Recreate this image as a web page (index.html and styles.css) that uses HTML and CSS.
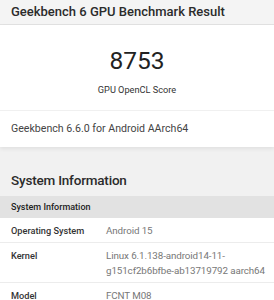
FILE: index.html
```html
<!DOCTYPE html>
<html lang="en">
<head>
    <meta charset="UTF-8">
    <meta name="viewport" content="width=device-width, initial-scale=1.0">
    <title>Geekbench 6 GPU Benchmark Result</title>
    <link rel="stylesheet" href="styles.css">
</head>
<body>
    <div class="page-title">Geekbench 6 GPU Benchmark Result</div>

    <div class="result-card">
        <div class="score-box">
            <div class="score">8753</div>
            <div class="score-label">GPU OpenCL Score</div>
        </div>
        <div class="version-row">Geekbench 6.6.0 for Android AArch64</div>
    </div>

    <h2 class="section-title">System Information</h2>

    <table class="info-table">
        <colgroup>
            <col class="name-col">
            <col>
        </colgroup>
        <tr class="table-head">
            <th colspan="2">System Information</th>
        </tr>
        <tr>
            <td class="name">Operating System</td>
            <td class="value">Android 15</td>
        </tr>
        <tr>
            <td class="name">Kernel</td>
            <td class="value">Linux 6.1.138-android14-11-g151cf2b6bfbe-ab13719792 aarch64</td>
        </tr>
        <tr>
            <td class="name">Model</td>
            <td class="value">FCNT M08</td>
        </tr>
    </table>
</body>
</html>
```

FILE: styles.css
```css
body {
    margin: 0;
    background-color: #f1f1f1;
    font-family: Roboto, "Noto Sans", sans-serif;
    color: #333;
}
.page-title {
    height: 24px;
    line-height: 24px;
    padding: 0 11px;
    font-size: 13px;
    font-weight: 500;
    color: #2b2b2b;
    background-color: #f4f4f4;
    border-bottom: 1px solid #e2e2e2;
}
.result-card {
    background-color: #fff;
    box-shadow: 0 2px 4px rgba(0, 0, 0, 0.07);
}
.score-box {
    height: 85px;
    padding-top: 22px;
    box-sizing: border-box;
    text-align: center;
}
.score {
    font-size: 24.5px;
    line-height: 28px;
    color: #222;
}
.score-label {
    margin-top: 9px;
    font-size: 9.2px;
    line-height: 12px;
    color: #333;
}
.version-row {
    height: 36px;
    line-height: 36px;
    padding: 0 11px;
    border-top: 1px solid #f0f0f0;
    font-size: 10.6px;
    color: #444;
}
.section-title {
    margin: 24px 0 7px;
    padding: 0 11px;
    font-size: 13.5px;
    font-weight: 500;
    letter-spacing: -0.2px;
    line-height: 18px;
    color: #2b2b2b;
}
.info-table {
    width: 100%;
    table-layout: fixed;
    border-collapse: collapse;
    background-color: #fff;
}
.name-col {
    width: 106px;
}
.table-head th {
    height: 22px;
    padding: 0 11px;
    background-color: #e2e2e2;
    text-align: left;
    font-size: 9px;
    font-weight: 500;
    color: #222;
}
.info-table td {
    padding: 5px 11px 4px;
    border-bottom: 1px solid #ececec;
    vertical-align: top;
    line-height: 15px;
}
.info-table td.name {
    white-space: nowrap;
    font-size: 9.2px;
    font-weight: 500;
    color: #333;
}
.info-table td.value {
    padding-left: 0;
    padding-right: 4px;
    font-size: 9.8px;
    letter-spacing: -0.1px;
    color: #777;
}
```
